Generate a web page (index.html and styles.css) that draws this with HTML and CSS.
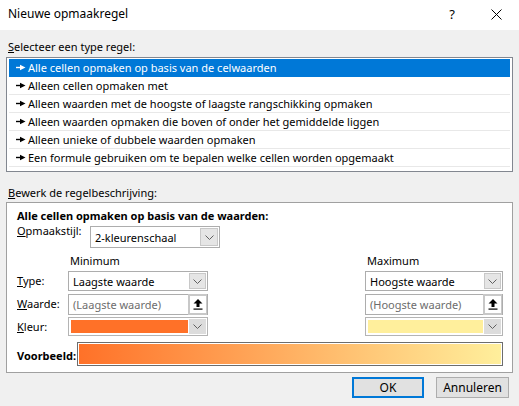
FILE: index.html
```html
<!DOCTYPE html>
<html lang="nl">
<head>
    <meta charset="UTF-8">
    <title>Nieuwe opmaakregel</title>
    <link rel="stylesheet" href="styles.css">
</head>
<body>

    <div class="titlebar">
        <span class="title">Nieuwe opmaakregel</span>
        <span class="help">?</span>
        <svg class="close" width="11" height="11" viewBox="0 0 11 11">
            <path d="M0.5 0.5 L10.5 10.5 M10.5 0.5 L0.5 10.5" stroke="#000" stroke-width="1"/>
        </svg>
    </div>

    <div class="dialog">
        <div class="label"><u>S</u>electeer een type regel:</div>

        <ul class="rule-list">
            <li class="selected"><svg class="bullet" width="10" height="7" viewBox="0 0 10 7"><path d="M0 3.5h5" stroke="currentColor" stroke-width="1.4"/><path d="M4 0.8 L9.5 3.5 L4 6.2 Z" fill="currentColor"/></svg>Alle cellen opmaken op basis van de celwaarden</li>
            <li><svg class="bullet" width="10" height="7" viewBox="0 0 10 7"><path d="M0 3.5h5" stroke="currentColor" stroke-width="1.4"/><path d="M4 0.8 L9.5 3.5 L4 6.2 Z" fill="currentColor"/></svg>Alleen cellen opmaken met</li>
            <li><svg class="bullet" width="10" height="7" viewBox="0 0 10 7"><path d="M0 3.5h5" stroke="currentColor" stroke-width="1.4"/><path d="M4 0.8 L9.5 3.5 L4 6.2 Z" fill="currentColor"/></svg>Alleen waarden met de hoogste of laagste rangschikking opmaken</li>
            <li><svg class="bullet" width="10" height="7" viewBox="0 0 10 7"><path d="M0 3.5h5" stroke="currentColor" stroke-width="1.4"/><path d="M4 0.8 L9.5 3.5 L4 6.2 Z" fill="currentColor"/></svg>Alleen waarden opmaken die boven of onder het gemiddelde liggen</li>
            <li><svg class="bullet" width="10" height="7" viewBox="0 0 10 7"><path d="M0 3.5h5" stroke="currentColor" stroke-width="1.4"/><path d="M4 0.8 L9.5 3.5 L4 6.2 Z" fill="currentColor"/></svg>Alleen unieke of dubbele waarden opmaken</li>
            <li><svg class="bullet" width="10" height="7" viewBox="0 0 10 7"><path d="M0 3.5h5" stroke="currentColor" stroke-width="1.4"/><path d="M4 0.8 L9.5 3.5 L4 6.2 Z" fill="currentColor"/></svg>Een formule gebruiken om te bepalen welke cellen worden opgemaakt</li>
        </ul>

        <div class="label label-second"><u>B</u>ewerk de regelbeschrijving:</div>

        <div class="desc-box">
            <div class="heading">Alle cellen opmaken op basis van de waarden:</div>

            <div class="style-row">
                <span class="style-label"><u>O</u>pmaakstijl:</span>
                <div class="combo combo-style">
                    <span class="combo-text">2-kleurenschaal</span>
                    <span class="drop"><svg width="9" height="5" viewBox="0 0 9 5"><path d="M0.5 0.5 L4.5 4.5 L8.5 0.5" fill="none" stroke="#606060"/></svg></span>
                </div>
            </div>

            <div class="scale-grid">
                <span></span>
                <span class="col-title">Minimum</span>
                <span></span>
                <span class="col-title">Maximum</span>

                <span class="row-label"><u>T</u>ype:</span>
                <div class="combo">
                    <span class="combo-text">Laagste waarde</span>
                    <span class="drop"><svg width="9" height="5" viewBox="0 0 9 5"><path d="M0.5 0.5 L4.5 4.5 L8.5 0.5" fill="none" stroke="#606060"/></svg></span>
                </div>
                <span></span>
                <div class="combo">
                    <span class="combo-text">Hoogste waarde</span>
                    <span class="drop"><svg width="9" height="5" viewBox="0 0 9 5"><path d="M0.5 0.5 L4.5 4.5 L8.5 0.5" fill="none" stroke="#606060"/></svg></span>
                </div>

                <span class="row-label"><u>W</u>aarde:</span>
                <div class="field">
                    <span class="placeholder">(Laagste waarde)</span>
                    <span class="pick"><svg width="10" height="11" viewBox="0 0 10 11"><path d="M5 0 L9.5 4.5 H6.5 V8 H3.5 V4.5 H0.5 Z" fill="#000"/><rect x="0.5" y="9.5" width="9" height="1.2" fill="#000"/></svg></span>
                </div>
                <span></span>
                <div class="field">
                    <span class="placeholder">(Hoogste waarde)</span>
                    <span class="pick"><svg width="10" height="11" viewBox="0 0 10 11"><path d="M5 0 L9.5 4.5 H6.5 V8 H3.5 V4.5 H0.5 Z" fill="#000"/><rect x="0.5" y="9.5" width="9" height="1.2" fill="#000"/></svg></span>
                </div>

                <span class="row-label"><u>K</u>leur:</span>
                <div class="color-pick">
                    <span class="swatch swatch-min"></span>
                    <span class="drop drop-color"><svg width="9" height="5" viewBox="0 0 9 5"><path d="M0.5 0.5 L4.5 4.5 L8.5 0.5" fill="none" stroke="#606060"/></svg></span>
                </div>
                <span></span>
                <div class="color-pick">
                    <span class="swatch swatch-max"></span>
                    <span class="drop drop-color"><svg width="9" height="5" viewBox="0 0 9 5"><path d="M0.5 0.5 L4.5 4.5 L8.5 0.5" fill="none" stroke="#606060"/></svg></span>
                </div>
            </div>

            <div class="preview-row">
                <span class="preview-label">Voorbeeld:</span>
                <div class="preview"><div class="gradient"></div></div>
            </div>
        </div>

        <div class="buttons">
            <button class="btn btn-default">OK</button>
            <button class="btn">Annuleren</button>
        </div>
    </div>

</body>
</html>
```

FILE: styles.css
```css
body {
    margin: 0;
    width: 519px;
    height: 406px;
    overflow: hidden;
    background-color: #f0f0f0;
    font-family: "Noto Sans", "Open Sans", sans-serif;
    font-size: 11px;
    color: #000;
}

u {
    text-decoration: underline;
    text-underline-offset: 1px;
}

/* title bar */
.titlebar {
    height: 30px;
    background-color: #fff;
    display: flex;
    align-items: center;
    padding: 0 17px 0 8px;
}

.title {
    flex: 1;
    font-size: 12px;
    line-height: 16px;
    margin-top: -2px;
}

.help {
    margin-right: 36px;
    font-size: 13px;
    margin-top: -2px;
}

.close {
    margin-top: -2px;
}

/* main body */
.dialog {
    padding: 0 6px;
}

.label {
    line-height: 16px;
    padding-top: 9px;
    padding-left: 2px;
    margin-bottom: 2px;
}

.label-second {
    padding-top: 13px;
    margin-bottom: 1px;
}

.rule-list {
    list-style: none;
    margin: 0;
    border: 1px solid #828790;
    background-color: #fff;
    padding: 1px 2px 4px 2px;
}

.rule-list li {
    height: 17px;
    line-height: 17px;
    border-bottom: 1px solid #e8e8e8;
    padding-left: 7px;
    display: flex;
    align-items: center;
    white-space: nowrap;
}

.rule-list li.selected {
    background-color: #0078d7;
    border-bottom-color: #0078d7;
    color: #fff;
}

.bullet {
    margin-right: 2px;
    flex: none;
}

/* description box */
.desc-box {
    border: 1px solid #a0a0a0;
    background-color: #fff;
    padding: 5px 9px 6px 10px;
}

.heading {
    font-weight: bold;
    line-height: 16px;
}

.style-row {
    display: flex;
    align-items: flex-start;
}

.style-label {
    width: 73px;
    line-height: 14px;
}

.combo {
    height: 18px;
    border: 1px solid #adadad;
    display: flex;
    align-items: center;
    padding: 0 1px 0 4px;
    background-color: #fff;
}

.combo-style {
    width: 123px;
    height: 20px;
    margin-top: 2px;
}

.combo-text {
    flex: 1;
    white-space: nowrap;
}

.drop {
    width: 15px;
    height: 14px;
    background-color: #e5e5e5;
    border: 1px solid #c8c8c8;
    display: flex;
    align-items: center;
    justify-content: center;
}

.combo-style .drop {
    height: 16px;
    width: 16px;
}

.scale-grid {
    display: grid;
    grid-template-columns: 51px 140px 1fr 138px;
    grid-template-rows: 13px 20px 20px 20px;
    row-gap: 3px;
    margin-top: 7px;
    align-items: center;
}

.col-title {
    line-height: 16px;
    height: 13px;
    padding-left: 2px;
    align-self: start;
    margin-top: -2px;
}

.scale-grid .combo {
    height: 18px;
}

.row-label {
    line-height: 16px;
}

.field {
    height: 19px;
    border: 1px solid #adadad;
    display: flex;
    align-items: center;
    padding-left: 4px;
}

.placeholder {
    flex: 1;
    color: #6d6d6d;
    white-space: nowrap;
}

.pick {
    width: 16px;
    height: 17px;
    border: 2px solid #c8c8c8;
    border-right-width: 1px;
    background-color: #fff;
    display: flex;
    align-items: center;
    justify-content: center;
}

.color-pick {
    height: 15px;
    border: 1px solid #b4b4b4;
    padding: 1px;
    display: flex;
    align-items: stretch;
    align-self: start;
}

.swatch {
    flex: 1;
    border: 1px solid #fff;
}

.swatch-min {
    background-color: #ff7128;
}

.swatch-max {
    background-color: #ffef9c;
}

.drop-color {
    width: 17px;
    height: auto;
    border: none;
    background-color: #dcdcdc;
}

/* preview */
.preview-row {
    display: flex;
    align-items: center;
    margin-top: 5px;
}

.preview-label {
    width: 60px;
    font-weight: bold;
    line-height: 16px;
    margin-top: 3px;
    white-space: nowrap;
}

.preview {
    flex: 1;
    height: 20px;
    border: 1px solid #6d6d6d;
    padding: 1px;
}

.gradient {
    height: 100%;
    background: linear-gradient(to right, #ff7128, #ffef9c);
}

/* buttons */
.buttons {
    display: flex;
    justify-content: flex-end;
    gap: 12px;
    margin-top: 4px;
    padding-right: 4px;
}

.btn {
    height: 21px;
    width: 73px;
    font-family: inherit;
    font-size: 12px;
    background-color: #e1e1e1;
    border: 1px solid #adadad;
    padding: 0;
    color: #000;
}

.btn-default {
    width: 72px;
    border: 2px solid #0078d7;
}
```
